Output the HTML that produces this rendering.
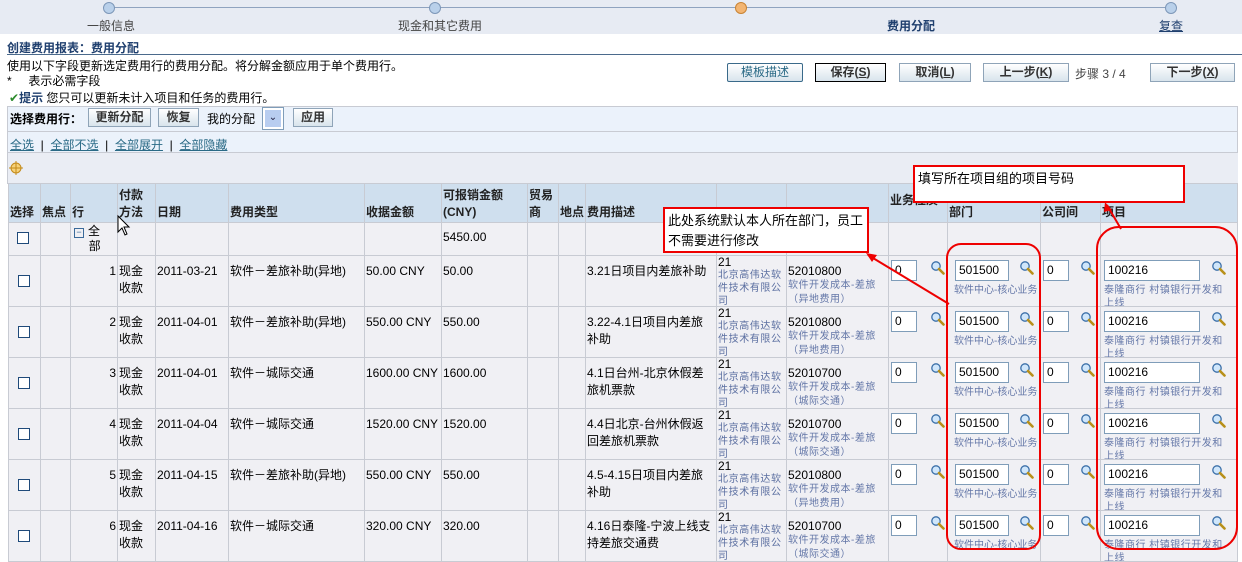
<!DOCTYPE html>
<html><head><meta charset="utf-8"><style>
*{margin:0;padding:0;box-sizing:border-box}
body{width:1242px;height:554px;overflow:hidden;background:#fff;font-family:"Liberation Sans","WenQuanYi Zen Hei","Noto Sans CJK SC",sans-serif;font-size:12px;color:#000;position:relative}
.a{position:absolute;white-space:nowrap}
.steps{position:absolute;left:0;top:0;width:1242px;height:34px;background:#e7ebf3}
.line{position:absolute;top:7px;height:1px;background:#8fa3bf}
.dot{position:absolute;top:2px;width:12px;height:12px;border-radius:50%;background:#b9d0ea;border:1px solid #7d97b8}
.btn{position:absolute;top:63px;height:19px;border:1px solid #8fa4b8;background:linear-gradient(#fff,#d8e4ec);font-size:12px;text-align:center;line-height:17px;color:#333;font-weight:bold}
.tb{position:absolute;height:19px;border:1px solid #8fa4b8;background:linear-gradient(#fff,#d8e4ec);font-weight:bold;text-align:center;line-height:17px;color:#333}
table{position:absolute;left:8px;top:183px;border-collapse:collapse;table-layout:fixed;width:1229px}
td,th{border:1px solid #c8cbd3;vertical-align:top;padding:0;font-size:12px;line-height:17px;overflow:hidden}
th{background:#cfdfee;font-weight:bold;text-align:left;vertical-align:bottom;color:#222;padding:1px}
td{background:#f0f0f4}
.c{height:50px;position:relative;overflow:hidden;padding:7px 1px 0 1px}
.h{height:32px;position:relative;overflow:hidden;padding:1px}
.cb{position:absolute;left:9px;top:19px;width:12px;height:12px;border:1px solid #1f4a7a;background:#fff}
.co{padding:0 1px;line-height:13px}
.sm{display:block;width:64px;font-size:10px;line-height:13px;color:#5a6ea0;letter-spacing:.6px;white-space:normal}
.sm2{font-size:10px;line-height:13px;color:#6477a8;letter-spacing:.5px}
.in{position:absolute;top:4px;height:21px;border:1px solid #7f9db9;background:#fff;padding:2px 3px;line-height:15px}
.mg{position:absolute;top:5px}
.red{position:absolute;border:2px solid #e00;background:#fff;font-size:13px;line-height:20px;padding:2px 3px}
.lk{color:#2a6a86;text-decoration:underline}
.dp{position:absolute;left:6px;top:28px;white-space:nowrap;letter-spacing:0}
.pj{position:absolute;left:3px;top:28px;white-space:normal;width:128px}
</style></head><body>
<svg width="0" height="0" style="position:absolute"><defs><g id="m"><circle cx="5" cy="5" r="4.2" fill="#cfe6fb" stroke="#3b6fa8" stroke-width="1.3"/><path d="M8 8L12.5 12.5" stroke="#b8901a" stroke-width="2.6" stroke-linecap="round"/></g></defs></svg>
<div class="steps">
<div class="line" style="left:109px;width:1062px"></div>
<div class="dot" style="left:103px"></div>
<div class="dot" style="left:429px"></div>
<div class="dot" style="left:735px;background:#f3b572;border-color:#c98333"></div>
<div class="dot" style="left:1165px"></div>
<div class="a" style="left:87px;top:17px;color:#444">一般信息</div>
<div class="a" style="left:398px;top:17px;color:#444">现金和其它费用</div>
<div class="a" style="left:887px;top:17px;color:#1f3f6e;font-weight:bold">费用分配</div>
<div class="a" style="left:1159px;top:17px;color:#1f3f6e;text-decoration:underline">复查</div>
</div>
<div class="a" style="left:7px;top:39px;font-weight:bold;color:#1f3f6e">创建费用报表：费用分配</div>
<div class="a" style="left:7px;top:54px;width:1235px;height:1px;background:#4b6a8c"></div>
<div class="a" style="left:7px;top:57px">使用以下字段更新选定费用行的费用分配。将分解金额应用于单个费用行。</div>
<div class="a" style="left:7px;top:72px">*&nbsp;&nbsp;&nbsp;&nbsp; 表示必需字段</div>
<div class="a" style="left:9px;top:89px"><span style="color:#2a8a2a">✔</span><b style="color:#1f3f6e">提示</b> 您只可以更新未计入项目和任务的费用行。</div>
<div class="btn" style="left:727px;width:76px;color:#2a6a86;font-weight:normal;border-color:#3a6a8a;border-radius:2px">模板描述</div>
<div class="btn" style="left:815px;width:71px;border:1px solid #000">保存(<u>S</u>)</div>
<div class="btn" style="left:899px;width:72px">取消(<u>L</u>)</div>
<div class="btn" style="left:983px;width:86px">上一步(<u>K</u>)</div>
<div class="a" style="left:1075px;top:65px;color:#444">步骤 3 / 4</div>
<div class="btn" style="left:1150px;width:85px">下一步(<u>X</u>)</div>
<div class="a" style="left:7px;top:106px;width:1231px;height:26px;background:#ebf2fb;border:1px solid #c8cbd3"></div>
<div class="a" style="left:7px;top:132px;width:1231px;height:21px;background:#ebf2fb;border:1px solid #c8cbd3;border-top:0"></div>
<div class="a" style="left:7px;top:153px;width:1231px;height:31px;background:#eaedf4;border-left:1px solid #c8cbd3"></div>
<div class="a" style="left:10px;top:110px;font-weight:bold">选择费用行：</div>
<div class="tb" style="left:88px;top:108px;width:63px">更新分配</div>
<div class="tb" style="left:158px;top:108px;width:41px">恢复</div>
<div class="a" style="left:207px;top:110px">我的分配</div>
<div class="a" style="left:262px;top:107px;width:22px;height:23px;border:1px solid #7f9db9;background:#fff"><div style="margin:2px;width:16px;height:17px;background:#b8cdf0;text-align:center;line-height:16px;font-size:10px;color:#224">⌄</div></div>
<div class="tb" style="left:293px;top:108px;width:40px">应用</div>
<div class="a" style="left:10px;top:136px"><span class="lk">全选</span> &nbsp;| &nbsp;<span class="lk">全部不选</span> &nbsp;| &nbsp;<span class="lk">全部展开</span> &nbsp;| &nbsp;<span class="lk">全部隐藏</span></div>
<svg class="a" style="left:9px;top:161px" width="14" height="14"><circle cx="7" cy="7" r="5" fill="#f7d27a" stroke="#c38a1a"/><path d="M7 0V14M0 7H14" stroke="#c38a1a"/></svg>
<table>
<colgroup><col style="width:32px"><col style="width:30px"><col style="width:47px"><col style="width:38px"><col style="width:73px"><col style="width:136px"><col style="width:77px"><col style="width:86px"><col style="width:31px"><col style="width:27px"><col style="width:131px"><col style="width:70px"><col style="width:102px"><col style="width:59px"><col style="width:93px"><col style="width:60px"><col style="width:137px"></colgroup>
<tr style="height:39px"><th>选择</th><th>焦点</th><th>行</th><th>付款方法</th><th>日期</th><th>费用类型</th><th>收据金额</th><th>可报销金额(CNY)</th><th>贸易商</th><th>地点</th><th>费用描述</th><th></th><th></th><th style="vertical-align:top;padding-top:8px">业务性质</th><th>部门</th><th>公司间</th><th>项目</th></tr>
<tr><td><div class="h"><span class="cb" style="top:9px;left:8px"></span></div></td><td><div class="h"></div></td><td><div class="h" style="line-height:15px"><span style="display:inline-block;width:10px;height:10px;border:1px solid #3a6a9a;font-size:9px;line-height:7px;text-align:center;color:#3a6a9a;margin:3px 4px 0 2px">−</span>全<br>&nbsp;&nbsp;&nbsp;&nbsp;&nbsp;部</div></td><td></td><td></td><td></td><td></td><td><div class="h" style="padding-top:6px">5450.00</div></td><td></td><td></td><td></td><td></td><td></td><td></td><td></td><td></td><td></td></tr>
<tr><td><div class="c"><span class="cb"></span></div></td><td></td><td><div class="c" style="text-align:right">1</div></td><td><div class="c">现金收款</div></td><td><div class="c">2011-03-21</div></td><td><div class="c">软件－差旅补助(异地)</div></td><td><div class="c">50.00 CNY</div></td><td><div class="c">50.00</div></td><td></td><td></td><td><div class="c">3.21日项目内差旅补助</div></td><td><div class="c co" style="padding-top:0">21<br><span class="sm">北京高伟达软件技术有限公司</span></div></td><td><div class="c co" style="padding-top:9px">52010800<br><span class="sm2">软件开发成本-差旅（异地费用）</span></div></td><td><div class="c"><span class="in" style="left:2px;width:26px">0</span><svg class="mg" style="left:42px" width="14" height="14"><use href="#m"/></svg></div></td><td><div class="c"><span class="in" style="left:7px;width:54px">501500</span><svg class="mg" style="left:72px" width="14" height="14"><use href="#m"/></svg><div class="sm2 dp">软件中心-核心业务</div></div></td><td><div class="c"><span class="in" style="left:2px;width:26px">0</span><svg class="mg" style="left:40px" width="14" height="14"><use href="#m"/></svg></div></td><td><div class="c"><span class="in" style="left:3px;width:96px">100216</span><svg class="mg" style="left:111px" width="14" height="14"><use href="#m"/></svg><div class="sm2 pj">泰隆商行 村镇银行开发和上线</div></div></td></tr>
<tr><td><div class="c"><span class="cb"></span></div></td><td></td><td><div class="c" style="text-align:right">2</div></td><td><div class="c">现金收款</div></td><td><div class="c">2011-04-01</div></td><td><div class="c">软件－差旅补助(异地)</div></td><td><div class="c">550.00 CNY</div></td><td><div class="c">550.00</div></td><td></td><td></td><td><div class="c">3.22-4.1日项目内差旅补助</div></td><td><div class="c co" style="padding-top:0">21<br><span class="sm">北京高伟达软件技术有限公司</span></div></td><td><div class="c co" style="padding-top:9px">52010800<br><span class="sm2">软件开发成本-差旅（异地费用）</span></div></td><td><div class="c"><span class="in" style="left:2px;width:26px">0</span><svg class="mg" style="left:42px" width="14" height="14"><use href="#m"/></svg></div></td><td><div class="c"><span class="in" style="left:7px;width:54px">501500</span><svg class="mg" style="left:72px" width="14" height="14"><use href="#m"/></svg><div class="sm2 dp">软件中心-核心业务</div></div></td><td><div class="c"><span class="in" style="left:2px;width:26px">0</span><svg class="mg" style="left:40px" width="14" height="14"><use href="#m"/></svg></div></td><td><div class="c"><span class="in" style="left:3px;width:96px">100216</span><svg class="mg" style="left:111px" width="14" height="14"><use href="#m"/></svg><div class="sm2 pj">泰隆商行 村镇银行开发和上线</div></div></td></tr>
<tr><td><div class="c"><span class="cb"></span></div></td><td></td><td><div class="c" style="text-align:right">3</div></td><td><div class="c">现金收款</div></td><td><div class="c">2011-04-01</div></td><td><div class="c">软件－城际交通</div></td><td><div class="c">1600.00 CNY</div></td><td><div class="c">1600.00</div></td><td></td><td></td><td><div class="c">4.1日台州-北京休假差旅机票款</div></td><td><div class="c co" style="padding-top:0">21<br><span class="sm">北京高伟达软件技术有限公司</span></div></td><td><div class="c co" style="padding-top:9px">52010700<br><span class="sm2">软件开发成本-差旅（城际交通）</span></div></td><td><div class="c"><span class="in" style="left:2px;width:26px">0</span><svg class="mg" style="left:42px" width="14" height="14"><use href="#m"/></svg></div></td><td><div class="c"><span class="in" style="left:7px;width:54px">501500</span><svg class="mg" style="left:72px" width="14" height="14"><use href="#m"/></svg><div class="sm2 dp">软件中心-核心业务</div></div></td><td><div class="c"><span class="in" style="left:2px;width:26px">0</span><svg class="mg" style="left:40px" width="14" height="14"><use href="#m"/></svg></div></td><td><div class="c"><span class="in" style="left:3px;width:96px">100216</span><svg class="mg" style="left:111px" width="14" height="14"><use href="#m"/></svg><div class="sm2 pj">泰隆商行 村镇银行开发和上线</div></div></td></tr>
<tr><td><div class="c"><span class="cb"></span></div></td><td></td><td><div class="c" style="text-align:right">4</div></td><td><div class="c">现金收款</div></td><td><div class="c">2011-04-04</div></td><td><div class="c">软件－城际交通</div></td><td><div class="c">1520.00 CNY</div></td><td><div class="c">1520.00</div></td><td></td><td></td><td><div class="c">4.4日北京-台州休假返回差旅机票款</div></td><td><div class="c co" style="padding-top:0">21<br><span class="sm">北京高伟达软件技术有限公司</span></div></td><td><div class="c co" style="padding-top:9px">52010700<br><span class="sm2">软件开发成本-差旅（城际交通）</span></div></td><td><div class="c"><span class="in" style="left:2px;width:26px">0</span><svg class="mg" style="left:42px" width="14" height="14"><use href="#m"/></svg></div></td><td><div class="c"><span class="in" style="left:7px;width:54px">501500</span><svg class="mg" style="left:72px" width="14" height="14"><use href="#m"/></svg><div class="sm2 dp">软件中心-核心业务</div></div></td><td><div class="c"><span class="in" style="left:2px;width:26px">0</span><svg class="mg" style="left:40px" width="14" height="14"><use href="#m"/></svg></div></td><td><div class="c"><span class="in" style="left:3px;width:96px">100216</span><svg class="mg" style="left:111px" width="14" height="14"><use href="#m"/></svg><div class="sm2 pj">泰隆商行 村镇银行开发和上线</div></div></td></tr>
<tr><td><div class="c"><span class="cb"></span></div></td><td></td><td><div class="c" style="text-align:right">5</div></td><td><div class="c">现金收款</div></td><td><div class="c">2011-04-15</div></td><td><div class="c">软件－差旅补助(异地)</div></td><td><div class="c">550.00 CNY</div></td><td><div class="c">550.00</div></td><td></td><td></td><td><div class="c">4.5-4.15日项目内差旅补助</div></td><td><div class="c co" style="padding-top:0">21<br><span class="sm">北京高伟达软件技术有限公司</span></div></td><td><div class="c co" style="padding-top:9px">52010800<br><span class="sm2">软件开发成本-差旅（异地费用）</span></div></td><td><div class="c"><span class="in" style="left:2px;width:26px">0</span><svg class="mg" style="left:42px" width="14" height="14"><use href="#m"/></svg></div></td><td><div class="c"><span class="in" style="left:7px;width:54px">501500</span><svg class="mg" style="left:72px" width="14" height="14"><use href="#m"/></svg><div class="sm2 dp">软件中心-核心业务</div></div></td><td><div class="c"><span class="in" style="left:2px;width:26px">0</span><svg class="mg" style="left:40px" width="14" height="14"><use href="#m"/></svg></div></td><td><div class="c"><span class="in" style="left:3px;width:96px">100216</span><svg class="mg" style="left:111px" width="14" height="14"><use href="#m"/></svg><div class="sm2 pj">泰隆商行 村镇银行开发和上线</div></div></td></tr>
<tr><td><div class="c"><span class="cb"></span></div></td><td></td><td><div class="c" style="text-align:right">6</div></td><td><div class="c">现金收款</div></td><td><div class="c">2011-04-16</div></td><td><div class="c">软件－城际交通</div></td><td><div class="c">320.00 CNY</div></td><td><div class="c">320.00</div></td><td></td><td></td><td><div class="c">4.16日泰隆-宁波上线支持差旅交通费</div></td><td><div class="c co" style="padding-top:0">21<br><span class="sm">北京高伟达软件技术有限公司</span></div></td><td><div class="c co" style="padding-top:9px">52010700<br><span class="sm2">软件开发成本-差旅（城际交通）</span></div></td><td><div class="c"><span class="in" style="left:2px;width:26px">0</span><svg class="mg" style="left:42px" width="14" height="14"><use href="#m"/></svg></div></td><td><div class="c"><span class="in" style="left:7px;width:54px">501500</span><svg class="mg" style="left:72px" width="14" height="14"><use href="#m"/></svg><div class="sm2 dp">软件中心-核心业务</div></div></td><td><div class="c"><span class="in" style="left:2px;width:26px">0</span><svg class="mg" style="left:40px" width="14" height="14"><use href="#m"/></svg></div></td><td><div class="c"><span class="in" style="left:3px;width:96px">100216</span><svg class="mg" style="left:111px" width="14" height="14"><use href="#m"/></svg><div class="sm2 pj">泰隆商行 村镇银行开发和上线</div></div></td></tr>
</table>
<svg class="a" style="left:0;top:0" width="1242" height="554">
<rect x="947" y="244" width="93" height="305" rx="14" fill="none" stroke="#e00" stroke-width="2"/>
<rect x="1097" y="227" width="140" height="322" rx="22" fill="none" stroke="#e00" stroke-width="2"/>
<path d="M949 304L868 255" stroke="#e00" stroke-width="2"/><path d="M866 253L877 255L872 262Z" fill="#e00"/>
<path d="M1121 229L1107 205" stroke="#e00" stroke-width="2"/><path d="M1105 202L1112 210L1104 212Z" fill="#e00"/>
<path d="M118 216L118 232L122 228L125 235L127 234L124 227L129 227Z" fill="#fff" stroke="#000"/>
</svg>
<div class="red" style="left:913px;top:165px;width:272px;height:38px">填写所在项目组的项目号码</div>
<div class="red" style="left:663px;top:207px;width:206px;height:46px">此处系统默认本人所在部门，员工不需要进行修改</div>
</body></html>
